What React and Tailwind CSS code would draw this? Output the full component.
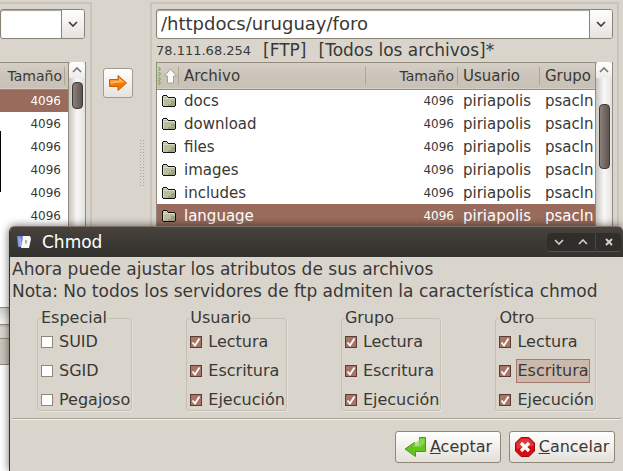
import React, { useState } from 'react';
import clsx from 'clsx';

const FILES = ['docs', 'download', 'files', 'images', 'includes', 'language'];

const GROUPS = [
  { name: 'Especial', options: ['SUID', 'SGID', 'Pegajoso'], on: false },
  { name: 'Usuario', options: ['Lectura', 'Escritura', 'Ejecución'], on: true },
  { name: 'Grupo', options: ['Lectura', 'Escritura', 'Ejecución'], on: true },
  { name: 'Otro', options: ['Lectura', 'Escritura', 'Ejecución'], on: true },
];

function FolderIcon() {
  return (
    <svg width="14" height="12" viewBox="0 0 14 12" shapeRendering="crispEdges" aria-hidden="true">
      <path d="M1 1h5v1h7v9H1z" fill="#b9bd9c" />
      <path d="M2 1h3v1H2zM1 3h11v1H1zM1 4h1v6H1z" fill="#d9dcc6" />
      <path d="M9 6h4v5H6v-2h3z" fill="#9fa383" />
      <path d="M1 0h4v1H1zM0 1h1v10H0zM5 1h1v1H5zM6 2h7v1H6zM13 3h1v8h-1zM1 11h12v1H1z" fill="#111" />
    </svg>
  );
}

function Chevron({ up, className }) {
  return (
    <svg width="10" height="6" viewBox="0 0 10 6" fill="none" className={className} aria-hidden="true">
      <path d={up ? 'M1 5l4-4 4 4' : 'M1 1l4 4 4-4'} stroke="currentColor" strokeWidth="1.6" />
    </svg>
  );
}

function PathSelect({ label, value, className }) {
  return (
    <div className={clsx('relative h-[30px] text-[#3a3835]', className)}>
      <select
        aria-label={label}
        className="h-full w-full appearance-none rounded-[3px] border border-[#8a8276] bg-white pl-1 pr-6 text-lg leading-7 shadow-[inset_0_1px_1px_#a9a49c]"
      >
        <option>{value}</option>
      </select>
      <span className="pointer-events-none absolute inset-y-px right-px flex w-[23px] items-center justify-center rounded-r-[2px] border-l border-[#8a8276] bg-linear-to-b from-white to-[#e6e3de]">
        <Chevron />
      </span>
    </div>
  );
}

function Scrollbar({ thumb }) {
  return (
    <div className="flex w-[17px] shrink-0 flex-col items-center border-r border-[#8f8a82] bg-linear-to-r from-[#c9c6c1] via-[#f8f8f7] to-[#e4e2df]">
      <button type="button" aria-label="Subir" className="flex h-4 w-full items-center justify-center rounded-t bg-linear-to-b from-white to-[#eeecea] text-[#77736d]">
        <Chevron up />
      </button>
      <div className={clsx('w-[11px] rounded border border-[#403936] bg-linear-to-r from-[#8d817c] to-[#5f5450]', thumb)} />
    </div>
  );
}

function HeadCell({ children, last, className }) {
  return (
    <th scope="col" className="h-[26px] p-0 font-normal">
      <div className={clsx('h-[18px] overflow-hidden leading-[18px]', !last && 'border-r border-[#aca598]', className)}>
        {children}
      </div>
    </th>
  );
}

const headRow = 'h-[26px] border-b border-[#948b7d] bg-linear-to-b from-[#d5cfc6] via-[#cbc4ba] to-[#c8c1b6]';

function LeftPane() {
  return (
    <section className="flex w-[92px] shrink-0 flex-col">
      <div className="mt-0.5 flex h-[323px] flex-col border-r-2 border-t-2 border-[#c9c4ba] pt-[5px]">
        <PathSelect label="Ruta local" value="" className="mr-[5px]" />
        <div className="mr-1 mt-[23px] flex min-h-0 flex-1">
          <div className="min-w-0 flex-1 border-b border-r border-t border-[#948b7d] bg-white">
            <table className="w-full table-fixed text-[15px]">
              <thead>
                <tr className={headRow}>
                  <HeadCell className="mr-[3px] pr-0.5 text-right text-sm">Tamaño</HeadCell>
                </tr>
              </thead>
              <tbody>
                {FILES.map((f, i) => (
                  <tr key={f} className={clsx('h-[23px]', i === 0 && 'bg-[#996b5d] text-white')}>
                    <td className="p-0 pr-[7px] text-right text-xs">4096</td>
                  </tr>
                ))}
              </tbody>
            </table>
          </div>
          <Scrollbar thumb="mt-1 h-[27px]" />
        </div>
        <div className="h-[17px] border-b border-[#8f8a82] bg-linear-to-b from-[#d0cdc8] to-[#f8f8f7]" />
      </div>
      <div className="flex flex-1 flex-col border-r-2 border-t-2 border-[#c9c4ba] pt-[11px]">
        <div className="h-[27px] border-y border-[#948b7d] bg-[#cbc4ba]" />
        <div className="flex-1 bg-white" />
      </div>
    </section>
  );
}

function RightPane() {
  return (
    <section className="mr-1 mt-0.5 flex min-w-0 flex-1 flex-col border-x-2 border-t-2 border-[#c9c4ba] px-1 pt-[5px]">
      <PathSelect label="Ruta remota" value="/httpdocs/uruguay/foro" />
      <p className="flex h-[23px] items-center gap-3 overflow-hidden whitespace-nowrap text-[17px]">
        <span className="text-[13px]">78.111.68.254</span>
        <span>[FTP]</span>
        <span>[Todos los archivos]*</span>
      </p>
      <div className="flex min-h-0 flex-1">
        <div className="min-w-0 flex-1 overflow-hidden border-x border-t border-[#948b7d] bg-white">
          <table className="w-full table-fixed text-[15px]">
            <colgroup>
              <col className="w-[22px]" />
              <col />
              <col className="w-[92px]" />
              <col className="w-[82px]" />
              <col className="w-[55px]" />
            </colgroup>
            <thead>
              <tr className={clsx(headRow, 'text-left')}>
                <HeadCell>
                  <svg width="21" height="18" viewBox="0 0 21 18" role="img" aria-label="Orden ascendente">
                    <path d="M1 1h2v2H1M1 6h2v2H1M1 11h2v2H1M1 15h2v2H1" fill="#fff" stroke="#5ba52c" strokeWidth="1" />
                    <path d="M13.500 2l6 7h-3v7h-6V9h-3z" fill="#fbfaf8" stroke="#a5a199" strokeLinejoin="round" />
                  </svg>
                </HeadCell>
                <HeadCell className="pl-[5px]">Archivo</HeadCell>
                <HeadCell className="pr-[3px] text-right text-sm">Tamaño</HeadCell>
                <HeadCell className="pl-[5px]">Usuario</HeadCell>
                <HeadCell last className="pl-[5px]">Grupo</HeadCell>
              </tr>
            </thead>
            <tbody>
              {FILES.map((f) => (
                <tr key={f} className={clsx('h-[23px] leading-[22px]', f === 'language' && 'bg-[#996b5d] text-white')}>
                  <td className="p-0 pl-[5px]"><FolderIcon /></td>
                  <td className="p-0 pl-[5px]">{f}</td>
                  <td className="p-0 pr-1 text-right text-xs">4096</td>
                  <td className="overflow-hidden p-0 pl-[5px]">piriapolis</td>
                  <td className="overflow-hidden p-0 pl-[5px]">psacln</td>
                </tr>
              ))}
            </tbody>
          </table>
        </div>
        <Scrollbar thumb="mt-[26px] h-[65px]" />
      </div>
    </section>
  );
}

function CheckRow({ label, defaultOn, focused }) {
  return (
    <label className="flex h-5 items-center gap-[5px] whitespace-nowrap">
      <span className="grid">
        <input
          type="checkbox"
          defaultChecked={defaultOn}
          className="peer col-start-1 row-start-1 h-3 w-3 appearance-none border border-[#8f8778] bg-white checked:border-[#5c3d35] checked:bg-[#a87465]"
        />
        <svg viewBox="0 0 12 12" className="pointer-events-none col-start-1 row-start-1 hidden h-3 w-3 peer-checked:block" fill="none" aria-hidden="true">
          <path d="M2.500 6.500L5 9.500 9.500 2.500" stroke="#fff" strokeWidth="1.8" />
        </svg>
      </span>
      <span className={clsx('border leading-[22px]', focused ? 'border-[#a57a6d] bg-[#cbb9ae]' : 'border-transparent')}>
        {label}
      </span>
    </label>
  );
}

function ChmodDialog({ onClose }) {
  return (
    <div
      role="dialog"
      aria-labelledby="chmod-title"
      className="absolute bottom-0 left-[9px] right-0 top-[226px] flex flex-col overflow-hidden rounded-t-md border-l border-[#34322e] bg-[#d9d5cd] shadow-[0_0_8px_#0009]"
    >
      <header className="flex h-[31px] shrink-0 items-center border-t border-[#7b726b] bg-linear-to-b from-[#4a423d] via-[#3b3934] to-[#32312d] pl-1.5 text-white">
        <svg width="16" height="14" viewBox="0 0 16 14" aria-hidden="true">
          <path d="M1 1h6L6 12H2z" fill="#6f86d6" />
          <path d="M2 2l3 1v8l-2 1z" fill="#93a7ea" />
          <path d="M7 1h7l1 3-2 9H5z" fill="#f6f6f6" />
          <path d="M9 5h2v3l-2 1z" fill="#b5aaa4" />
        </svg>
        <h1 id="chmod-title" className="ml-2.5 flex-1 text-[17px] leading-6">Chmod</h1>
        <div className="mr-0.5 flex h-[19px] items-center rounded border-b border-[#55524c] bg-[#2f2e2a] text-[#d5d1c9]">
          <button type="button" aria-label="Minimizar" className="flex w-6 justify-center"><Chevron /></button>
          <button type="button" aria-label="Maximizar" className="flex w-6 justify-center"><Chevron up /></button>
          <button type="button" aria-label="Cerrar" onClick={onClose} className="flex h-4 w-[26px] items-center justify-center border-l border-[#4d4a44]">
            <svg width="8" height="8" viewBox="0 0 8 8" stroke="currentColor" strokeWidth="2" aria-hidden="true">
              <path d="M1 1l6 6M7 1l-6 6" />
            </svg>
          </button>
        </div>
      </header>

      <form className="flex flex-col text-base" onSubmit={(e) => e.preventDefault()}>
        <div className="whitespace-nowrap px-0.5 pt-px text-[17px] leading-[22px]">
          <p>Ahora puede ajustar los atributos de sus archivos</p>
          <p>Nota: No todos los servidores de ftp admiten la característica chmod</p>
        </div>

        <div className="mt-1.5 flex justify-between px-[27px]">
          {GROUPS.map((g) => (
            <fieldset key={g.name} className="rounded-[3px] border border-[#c5bfb4] pl-[3px] shadow-[1px_1px_0_#e5e2dc]">
              <legend className="bg-[#d9d5cd] leading-5">{g.name}</legend>
              <div className="flex flex-col gap-[9px] pt-1">
                {g.options.map((o) => (
                  <CheckRow key={o} label={o} defaultOn={g.on} focused={g.name === 'Otro' && o === 'Escritura'} />
                ))}
              </div>
            </fieldset>
          ))}
        </div>

        <hr className="mx-0.5 mt-[7px] border-t border-[#aaa498] shadow-[0_1px_0_#f0eee9]" />

        <div className="mt-3 flex justify-end gap-2 pr-2">
          <button type="submit" className="flex h-8 w-[106px] items-center justify-center gap-1 rounded-[3px] border border-[#8f8778] bg-linear-to-b from-white to-[#e3e0da]">
            <svg width="22" height="22" viewBox="0 0 22 22" aria-hidden="true">
              <path d="M15.500 1.500H21.500V15.500H11.500V20.500L1 13L10.500 6.500V10H15.500z" fill="#62c41c" stroke="#4b9a16" strokeLinejoin="round" />
              <path d="M16.500 2.500h4v5L16 11H9.500V8.500L4 12.500" fill="#9add66" opacity="0.7" />
            </svg>
            <span><u>A</u>ceptar</span>
          </button>
          <button type="button" onClick={onClose} className="flex h-8 w-[106px] items-center justify-center gap-1 rounded-[3px] border border-[#8f8778] bg-linear-to-b from-white to-[#e3e0da]">
            <svg width="20" height="20" viewBox="0 0 20 20" aria-hidden="true">
              <path d="M6 .5h8L19.500 6v8L14 19.500H6L.5 14V6z" fill="#d40d12" stroke="#a80508" />
              <path d="M6.500 1.500h7l5 5V9Q10 9 1.500 12V6.500z" fill="#ea5353" opacity="0.6" />
              <path d="M6 6l8 8M14 6l-8 8" stroke="#fff" strokeWidth="3.200" />
            </svg>
            <span><u>C</u>ancelar</span>
          </button>
        </div>
      </form>
    </div>
  );
}

export default function App() {
  const [open, setOpen] = useState(true);

  return (
    <main className="relative flex min-h-screen overflow-hidden bg-[#d9d5cd] font-['DejaVu_Sans',sans-serif] text-[#3a3835]">
      <LeftPane />
      {/* caret left over at the window edge */}
      <span className="absolute left-0 top-[131px] h-[61px] w-px bg-black" />

      {/* Transfer controls */}
      <div className="flex w-[58px] shrink-0 flex-col items-center pt-[68px]">
        <button type="button" aria-label="Transferir" className="mr-1.5 flex h-[30px] w-[30px] items-center justify-center rounded-[3px] border border-[#a29b8f] bg-linear-to-b from-white to-[#e6e3de]">
          <svg width="20" height="18" viewBox="0 0 20 18" aria-hidden="true">
            <path d="M1.500 5.500H10V1.500L18.500 9L10 16.500V12.500H1.500z" fill="#f57900" stroke="#ce5c00" strokeLinejoin="round" />
            <path d="M2.500 6.500H11V3.500L16.500 8.500Q9 8 2.500 10z" fill="#fcb35c" />
          </svg>
        </button>
        <svg width="6" height="48" className="mr-1 mt-[42px] self-end" aria-hidden="true">
          <defs>
            <pattern id="grip" width="3" height="3" patternUnits="userSpaceOnUse">
              <rect width="1" height="1" fill="#aaa498" />
            </pattern>
          </defs>
          <rect width="6" height="48" fill="url(#grip)" />
        </svg>
      </div>

      <RightPane />
      {open && <ChmodDialog onClose={() => setOpen(false)} />}
    </main>
  );
}
